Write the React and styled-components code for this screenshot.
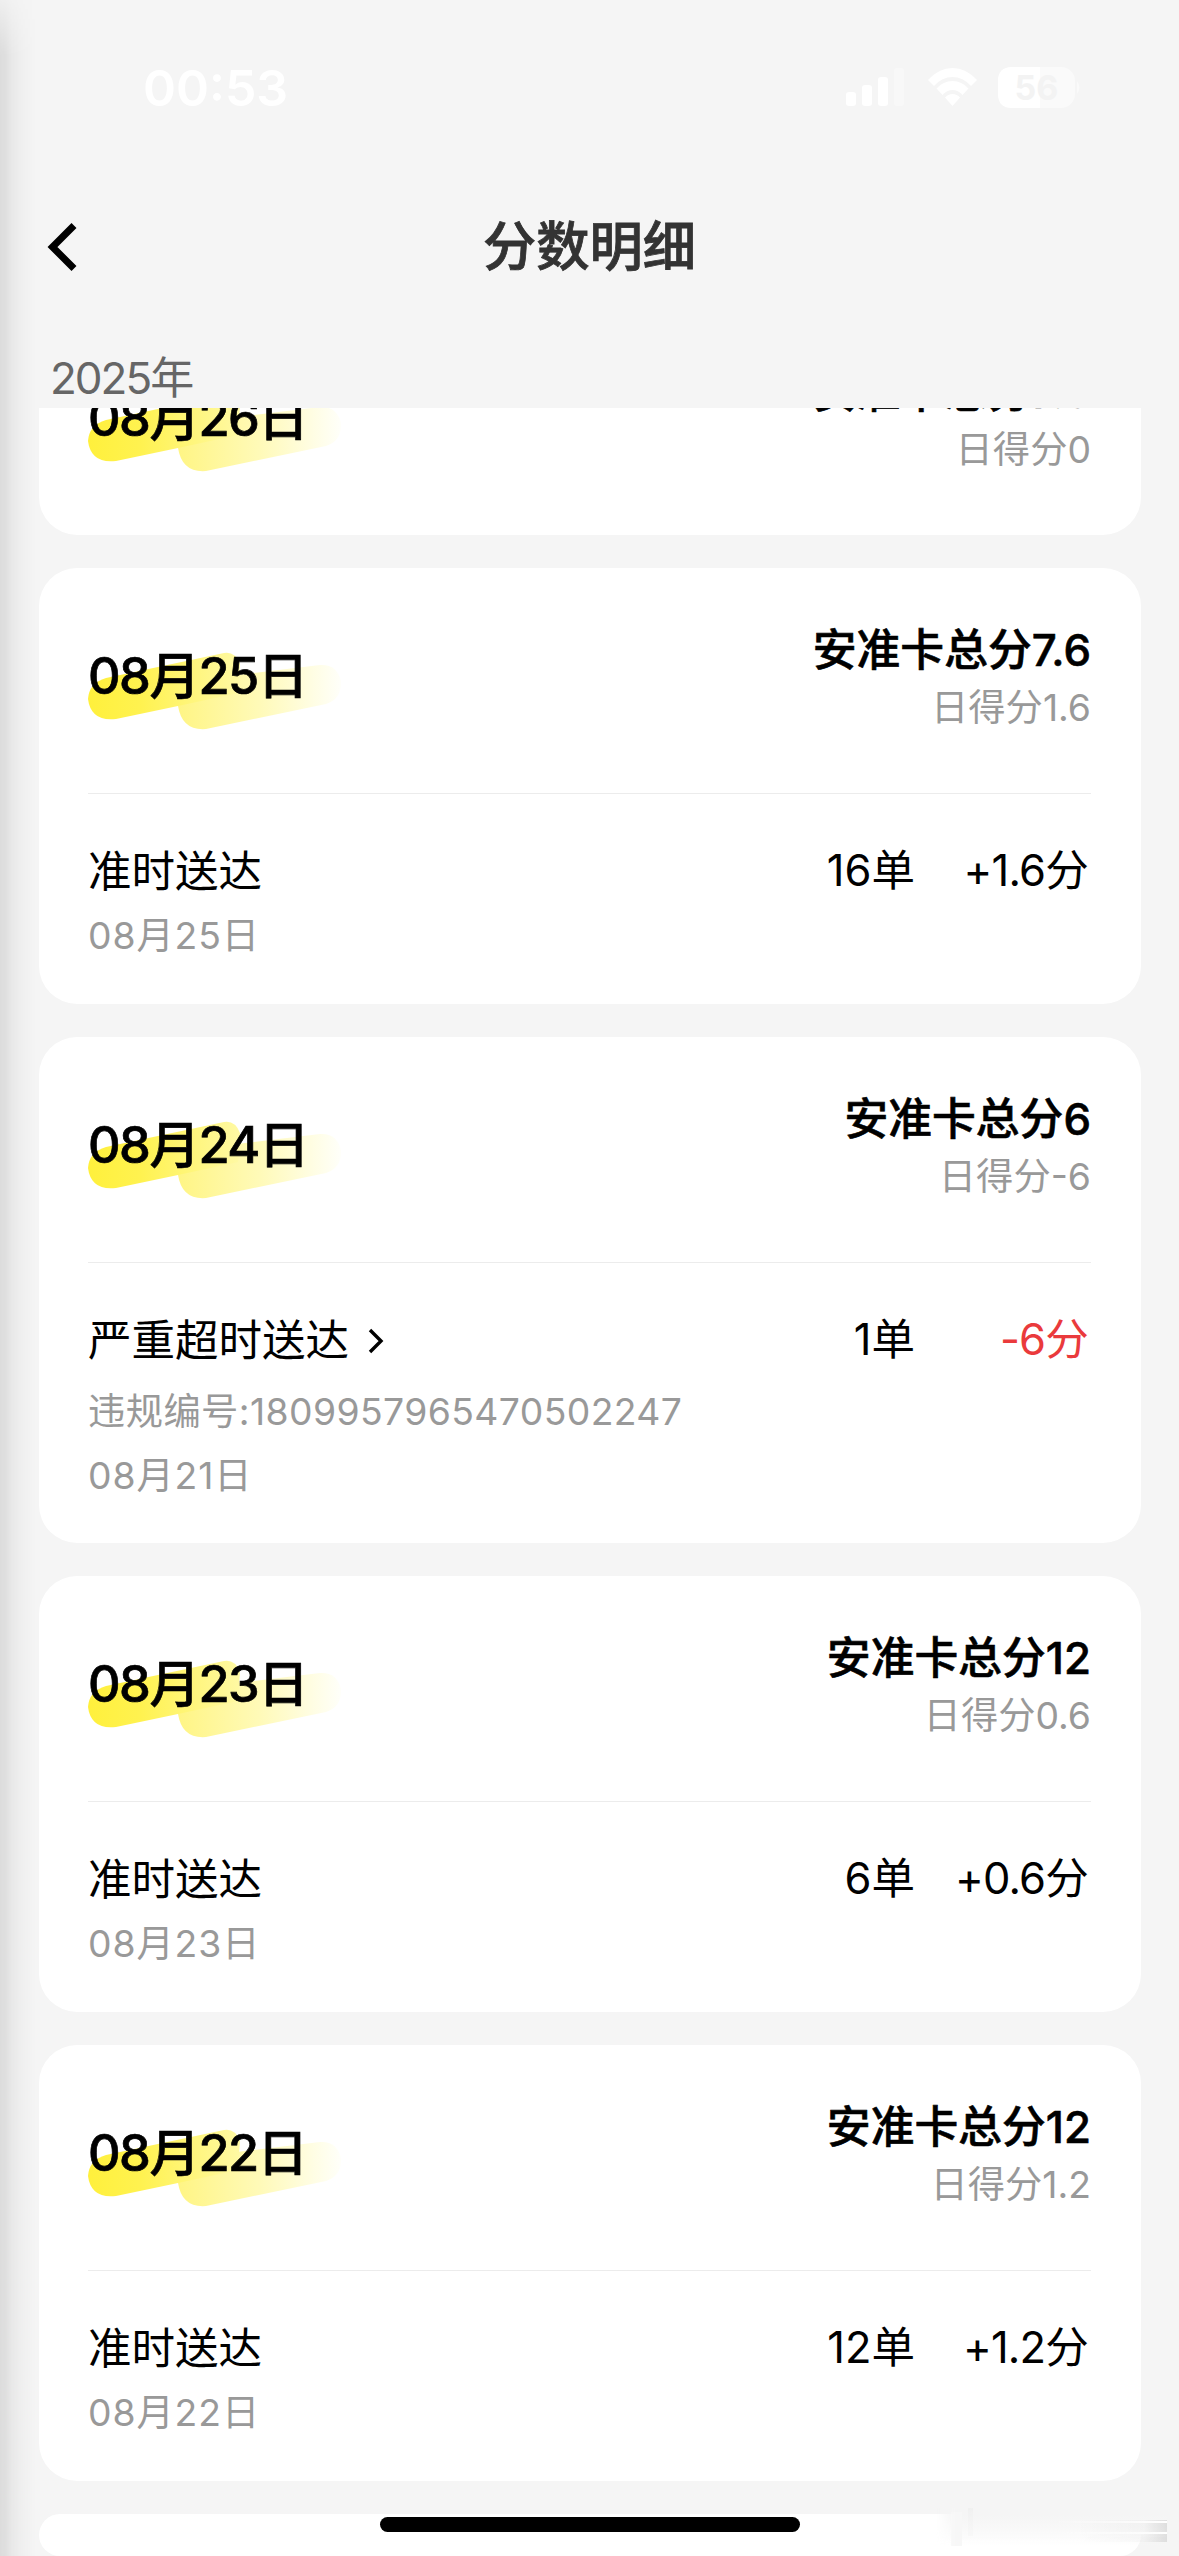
import React from 'react';
import styled, { createGlobalStyle } from 'styled-components';

const GlobalStyle = createGlobalStyle`
  * {
    box-sizing: border-box;
  }

  body {
    margin: 0;
    background: #f5f5f5;
    font-family: Inter, 'Noto Sans CJK SC', sans-serif;
    color: #000;
  }
`;

const Screen = styled.div`
  position: relative;
  width: 1179px;
  height: 2556px;
  overflow: hidden;
  display: flex;
  flex-direction: column;
  background: #f5f5f5;
`;

const StatusBar = styled.div`
  height: 176px;
  flex: none;
  display: flex;
  justify-content: space-between;
  padding: 58px 97px 0 143px;
`;

const Clock = styled.span`
  font-size: 50px;
  line-height: 60px;
  font-weight: 600;
  color: #fff;
`;

const StatusIcons = styled.svg`
  width: 240px;
  height: 60px;
`;

const BatteryLevel = styled.text`
  font-size: 34px;
  font-weight: 700;
  fill: #f3f3f3;
`;

const NavBar = styled.header`
  height: 142px;
  flex: none;
  display: grid;
  grid-template-columns: 1fr auto 1fr;
  align-items: center;
  padding: 0 45px;
`;

const BackIcon = styled.svg`
  width: 34px;
  height: 56px;
`;

const Title = styled.h1`
  margin: 0;
  font-size: 53.3px;
  line-height: 70px;
  font-weight: 500;
  -webkit-text-stroke: 0.8px #333;
  color: #333;
`;

const Year = styled.div`
  height: 90px;
  flex: none;
  padding: 30px 50px 0;
  font-size: 44px;
  line-height: 60px;
  letter-spacing: -2px;
  color: #666;
`;

const List = styled.main`
  flex: 1;
  min-height: 0;
  overflow: hidden;
  display: flex;
  flex-direction: column;
  justify-content: flex-end;
  gap: 33px;
  padding: 0 38px 0 39px;
`;

const Card = styled.section`
  flex: none;
  height: ${props => props.$height}px;
  padding: 0 50px 0 49px;
  border-radius: 38px;
  background: #fff;
`;

const CardHead = styled.div`
  height: 225px;
  display: flex;
  justify-content: space-between;
  padding-top: 53px;
`;

const DateMark = styled.div`
  position: relative;
  isolation: isolate;
  padding-top: 25px;
  font-size: 50.5px;
  line-height: 60px;
  font-weight: 500;
  -webkit-text-stroke: 0.7px #000;
  letter-spacing: -1.5px;
  white-space: nowrap;
`;

// Highlighter strokes under the date
const Brush = styled.svg`
  position: absolute;
  z-index: -1;
  left: 0;
  top: 31px;
  width: 260px;
  height: 84px;
`;

const Totals = styled.div`
  text-align: right;
`;

const Total = styled.div`
  font-size: 43.8px;
  line-height: 60px;
  font-weight: 500;
  -webkit-text-stroke: 0.6px #000;
`;

const DayScore = styled.div`
  padding-top: 1px;
  font-size: 37.3px;
  line-height: 52px;
  color: #999;
`;

const Record = styled.div`
  display: flex;
  justify-content: space-between;
  border-top: 1px solid #ececec;
  padding-top: 47px;
  font-size: 43.5px;
  line-height: 60px;
`;

const RecordName = styled.div`
  display: flex;
  align-items: center;
  gap: 19px;
`;

const ArrowIcon = styled.svg`
  width: 16px;
  height: 32px;
`;

const Note = styled.div`
  padding-top: ${props => props.$code ? '10px' : '0'};
  font-size: 37.3px;
  line-height: 64px;
  letter-spacing: ${props => props.$code ? '0.4px' : '0.9px'};
  color: #999;

  &:nth-child(2):last-child {
    padding-top: 3px;
  }
`;

const Figures = styled.div`
  display: flex;
  margin-top: -1px;
  padding-right: 3px;
`;

const Points = styled.span`
  width: 173px;
  text-align: right;
  letter-spacing: -0.8px;
  color: ${props => props.$negative ? '#ea3a3c' : '#000'};
`;

// Shadow of the page sliding over the previous one
const EdgeShadow = styled.div`
  position: absolute;
  left: 0;
  top: 0;
  bottom: 0;
  width: 36px;
  background: linear-gradient(
    90deg,
    rgba(0, 0, 0, 0.1),
    rgba(0, 0, 0, 0.085) 16%,
    rgba(0, 0, 0, 0.05) 32%,
    rgba(0, 0, 0, 0.025) 60%,
    transparent
  );
  mask-image: linear-gradient(rgba(0, 0, 0, 0.25), #000 56px);
`;

const HomeIndicator = styled.div`
  position: absolute;
  left: 380px;
  bottom: 24px;
  width: 420px;
  height: 15px;
  border-radius: 8px;
  background: #000;
`;

const Smudge = styled.div`
  position: absolute;
  left: 936px;
  bottom: 10px;
  width: 231px;
  height: 38px;
  display: flex;
  flex-direction: column;
  justify-content: center;
  gap: 9px;
  background:
    linear-gradient(90deg, transparent 60%, rgba(0, 0, 0, 0.025) 90%, rgba(0, 0, 0, 0.1)) 0 12px / 100% 22px no-repeat,
    linear-gradient(#f0f0f0, #f8f8f8) 32px 0 / 5px 28px no-repeat,
    linear-gradient(#f7f7f7, #f7f7f7) 15px 4px / 11px 34px no-repeat,
    linear-gradient(#f5f5f5 20%, #f9f9f9 60%, rgba(255, 255, 255, 0));
  mask-image: linear-gradient(90deg, transparent, #000 20px);
`;

const SmudgeLine = styled.div`
  height: 2px;
  background: linear-gradient(90deg, transparent 50%, #fff);
`;

const days = [
  { date: '08月26日', total: '7.6', score: '0' },
  { date: '08月25日', total: '7.6', score: '1.6', name: '准时送达', count: 16, points: '+1.6', on: '08月25日' },
  { date: '08月24日', total: '6', score: '-6', name: '严重超时送达', count: 1, points: '-6', on: '08月21日', code: '1809957965470502247' },
  { date: '08月23日', total: '12', score: '0.6', name: '准时送达', count: 6, points: '+0.6', on: '08月23日' },
  { date: '08月22日', total: '12', score: '1.2', name: '准时送达', count: 12, points: '+1.2', on: '08月22日' },
];

const cardHeight = (day) => {
  if (day.code) return 506;
  return day.name ? 436 : 225;
};

const DayCard = ({ day }) => (
  <Card $height={cardHeight(day)}>
    <CardHead>
      <DateMark>
        <Brush viewBox="0 0 260 84">
          <defs>
            <linearGradient id="brushDark" x1="0" x2="1">
              <stop offset="0" stopColor="#fff03c" />
              <stop offset="0.35" stopColor="#fff250" />
              <stop offset="1" stopColor="#fff9a4" />
            </linearGradient>
            <linearGradient id="brushLight" x1="0" x2="1">
              <stop offset="0" stopColor="#fff584" />
              <stop offset="0.5" stopColor="#fffab8" />
              <stop offset="1" stopColor="#fffffa" />
            </linearGradient>
          </defs>
          <path fill="url(#brushLight)" d="M90 40L140 24L232 13Q249 12 253 29Q254 47 238 52L118 77Q94 79 90 54Z" />
          <path fill="url(#brushDark)" d="M0 47Q1 31 18 26L136 1Q147 -1 152 12L150 41L90 54L28 67Q3 70 0 47Z" />
        </Brush>
        {day.date}
      </DateMark>
      <Totals>
        <Total>安准卡总分{day.total}</Total>
        <DayScore>日得分{day.score}</DayScore>
      </Totals>
    </CardHead>
    {day.name && (
      <Record>
        <div>
          <RecordName>
            {day.name}
            {day.code && (
              <ArrowIcon viewBox="0 0 16 32" fill="none" stroke="#000" strokeWidth="3.4">
                <path d="M2 6L13 17L2 28" />
              </ArrowIcon>
            )}
          </RecordName>
          {day.code && <Note $code>违规编号:{day.code}</Note>}
          <Note>{day.on}</Note>
        </div>
        <Figures>
          <span>{day.count}单</span>
          <Points $negative={day.points.startsWith('-')}>{day.points}分</Points>
        </Figures>
      </Record>
    )}
  </Card>
);

const App = () => (
  <>
    <GlobalStyle />
    <Screen>
      <StatusBar>
        <Clock>00:53</Clock>
        <StatusIcons viewBox="0 0 240 60" fill="#fff">
          {/* Signal */}
          <rect x="4" y="34" width="10" height="14" rx="3" />
          <rect x="20" y="27" width="10" height="21" rx="3" />
          <rect x="36" y="19" width="10" height="29" rx="3" />
          <rect x="52" y="10" width="10" height="38" rx="3" opacity="0.3" />
          {/* Wifi */}
          <path d="M86 22Q97 10 110.500 10Q124 10 135 22L129 28Q121 19 110.500 19Q100 19 92 28Z" />
          <path d="M94.500 30.500Q101 23 110.500 23Q120 23 126.500 30.500L120.500 37Q116 32 110.500 32Q105 32 100.500 37Z" />
          <path d="M103 39.500Q106 36 110.500 36Q115 36 118 39.500L110.500 48Z" />
          {/* Battery */}
          <rect x="156" y="9" width="77" height="41" rx="14" opacity="0.5" />
          <path d="M198 9H170Q156 9 156 23V36Q156 50 170 50H198Z" />
          <path d="M235 23Q240 29 235 36Z" opacity="0.5" />
          <BatteryLevel x="194.500" y="42" textAnchor="middle">56</BatteryLevel>
        </StatusIcons>
      </StatusBar>
      <NavBar>
        <BackIcon viewBox="0 0 34 56" fill="none" stroke="#000" strokeWidth="7">
          <path d="M29 6.500L7.500 28L29 49.500" />
        </BackIcon>
        <Title>分数明细</Title>
      </NavBar>
      <Year>2025年</Year>
      <List>
        {days.map(day => <DayCard key={day.date} day={day} />)}
        <Card $height={42} />
      </List>
      <EdgeShadow />
      <HomeIndicator />
      <Smudge>
        <SmudgeLine />
        <SmudgeLine />
      </Smudge>
    </Screen>
  </>
);

export default App;
